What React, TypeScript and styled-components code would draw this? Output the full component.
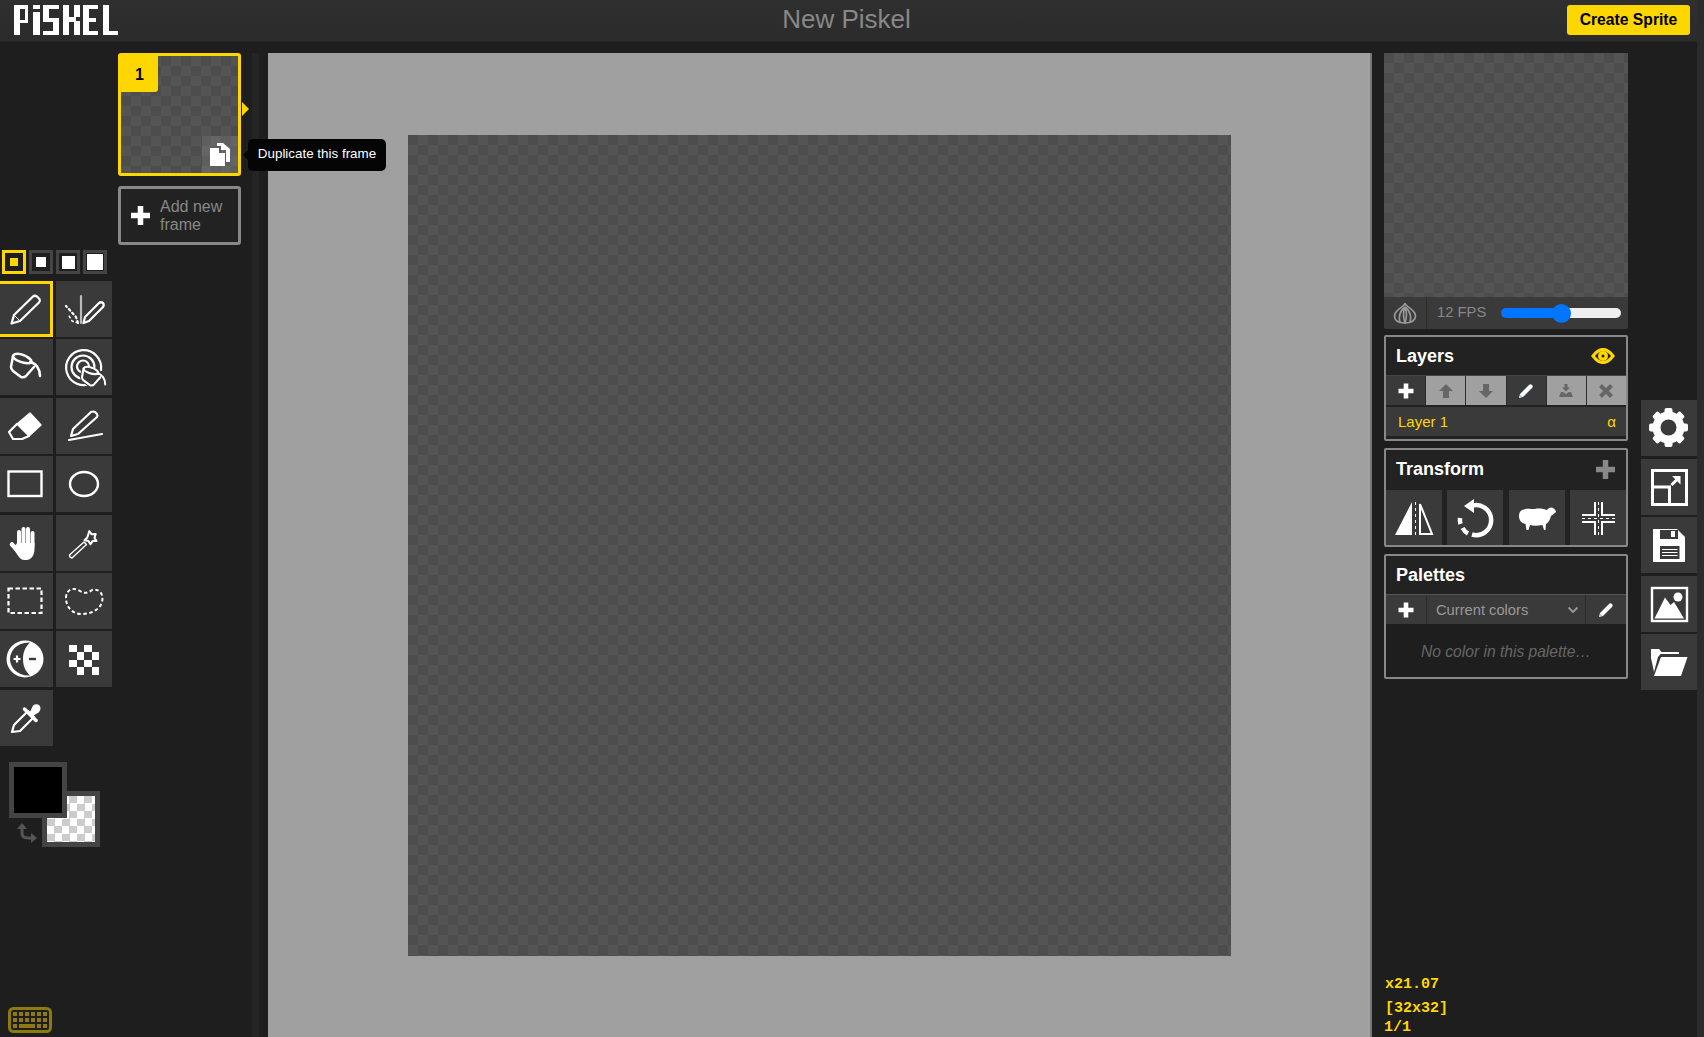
import React from "react";
import styled, { createGlobalStyle } from "styled-components";

const YELLOW = "#ffd700";

const GlobalStyle = createGlobalStyle`
  html, body {
    margin: 0;
    height: 100%;
    overflow: hidden;
    background: #1e1e1e;
    font-family: "Liberation Sans", Arial, sans-serif;
  }
  * { box-sizing: border-box; }
`;

const Page = styled.div`
  display: flex;
  width: 1704px;
  height: 1037px;
  overflow: hidden;
`;
const PageBar = styled.div`
  width: 7px;
  background: #2b2b2b;
`;
const Main = styled.div`
  display: flex;
  flex-direction: column;
  width: 1697px;
`;
const Header = styled.header`
  position: relative;
  display: flex;
  align-items: center;
  justify-content: space-between;
  height: 42px;
  padding: 0 7px 2px 14px;
  background: linear-gradient(#2f2f2f, #2b2b2b);
  border-bottom: 1px solid #252525;
`;
const Title = styled.div`
  position: absolute;
  left: 0;
  right: 0;
  text-align: center;
  font-size: 26px;
  color: #888;
  padding-right: 4px;
`;
const CreateButton = styled.button`
  position: relative;
  width: 123px;
  height: 30px;
  border: 0;
  border-radius: 3px;
  background: ${YELLOW};
  color: #000;
  font: bold 15.7px "Liberation Sans", Arial, sans-serif;
  padding: 0;
`;
const Body = styled.div`
  display: flex;
  flex: 1;
  min-height: 0;
`;

/* left tools */
const ToolsColumn = styled.div`
  width: 112px;
  padding-top: 208px;
  display: flex;
  flex-direction: column;
  position: relative;
`;
const PenSizes = styled.div`
  display: flex;
  gap: 3px;
  padding-left: 2px;
  height: 31px;
`;
const PenSize = styled.div<{ $active?: boolean }>`
  width: 24px;
  height: 24px;
  display: flex;
  align-items: center;
  justify-content: center;
  border: 3px solid ${(p) => (p.$active ? YELLOW : "#444")};
`;
const PenDot = styled.div<{ $size: number; $active?: boolean }>`
  width: ${(p) => p.$size}px;
  height: ${(p) => p.$size}px;
  background: ${(p) => (p.$active ? YELLOW : "#fff")};
`;
const ToolGrid = styled.div`
  display: grid;
  grid-template-columns: 56px 56px;
  grid-auto-rows: 56px;
  column-gap: 3px;
  row-gap: 2.4px;
  margin-left: -3px;
`;
const Tool = styled.div<{ $selected?: boolean }>`
  position: relative;
  width: 56px;
  height: 56px;
  background: #3a3a3a;
  ${(p) => (p.$selected ? `box-shadow: inset 0 0 0 3px ${YELLOW};` : "")}
  svg { display: block; }
`;
const Colors = styled.div`
  position: relative;
  height: 86px;
  margin: 16px 0 0 9px;
`;
const ColorSwatch = styled.div`
  position: absolute;
  left: 0;
  top: 0;
  width: 58px;
  height: 56px;
  border: 5px solid #444;
  background: #000;
  z-index: 1;
`;
const SecondarySwatch = styled.div`
  position: absolute;
  left: 33px;
  top: 29px;
  width: 58px;
  height: 56px;
  border: 5px solid #444;
  background: repeating-conic-gradient(#ccc 0 25%, #fff 0 50%) 0 0 / 15px 15px;
`;
const SwapIcon = styled.svg`
  position: absolute;
  left: 7px;
  top: 60px;
`;
const KeyboardIcon = styled.svg`
  position: absolute;
  left: 8px;
  bottom: 4px;
`;

/* frames */
const FramesColumn = styled.div`
  width: 123px;
  margin-left: 6px;
  padding-top: 11px;
  display: flex;
  flex-direction: column;
  gap: 10px;
`;
const checker = `repeating-conic-gradient(#545454 0 25%, #4d4d4d 0 50%) 0 0 / 20px 20px`;
const Thumb = styled.div`
  position: relative;
  width: 123px;
  height: 123px;
  border: 3px solid ${YELLOW};
  border-radius: 3px;
  background: ${checker};
`;
const FrameIndex = styled.div`
  position: absolute;
  left: 0;
  top: 0;
  width: 37px;
  height: 36px;
  background: ${YELLOW};
  border-bottom-right-radius: 3px;
  font-weight: bold;
  font-size: 16px;
  line-height: 37px;
  text-align: center;
`;
const DuplicateButton = styled.div`
  position: absolute;
  right: 0;
  bottom: 0;
  width: 36px;
  height: 37px;
  background: rgba(255, 255, 255, 0.1);
  display: flex;
  align-items: center;
  justify-content: center;
`;
const ThumbArrow = styled.div`
  position: absolute;
  left: 121px;
  top: 46px;
  border-left: 7px solid ${YELLOW};
  border-top: 7px solid transparent;
  border-bottom: 7px solid transparent;
`;
const Tooltip = styled.div`
  position: absolute;
  left: 127px;
  top: 83px;
  width: 138px;
  height: 32px;
  border-radius: 5px;
  background: #050505;
  color: #fff;
  font-size: 13.4px;
  line-height: 29px;
  text-align: center;
  white-space: nowrap;
  z-index: 5;
  &::before {
    content: "";
    position: absolute;
    left: -5px;
    top: 11px;
    border-right: 5px solid #050505;
    border-top: 5px solid transparent;
    border-bottom: 5px solid transparent;
  }
`;
const AddFrame = styled.div`
  display: flex;
  align-items: center;
  gap: 10px;
  width: 123px;
  height: 59px;
  padding-left: 10px;
  border: 3px solid #888;
  border-radius: 3px;
  background: #222;
  color: #888;
  font-size: 16px;
  line-height: 18px;
`;
const FramesBar = styled.div`
  width: 7px;
  margin: 11px 0 0 11px;
  background: #252525;
`;

/* canvas */
const Stage = styled.main`
  width: 1104px;
  margin: 11px 0 0 9px;
  background: #a0a0a0;
  border-right: 2px solid #777;
  display: flex;
  align-items: center;
  justify-content: center;
`;
const Canvas = styled.div`
  width: 823px;
  height: 821px;
  margin: 1px 0 0 1px;
  background: ${checker};
`;

/* right column */
const RightColumn = styled.div`
  position: relative;
  width: 244px;
  margin-left: 12px;
  padding-top: 11px;
  display: flex;
  flex-direction: column;
`;
const Preview = styled.div`
  width: 244px;
  height: 244px;
  background: ${checker};
`;
const FpsBar = styled.div`
  display: flex;
  align-items: center;
  height: 32px;
  padding-bottom: 2px;
  background: #3a3a3a;
  border-radius: 0 0 2px 2px;
  color: #888;
  font-size: 14.8px;
`;
const OnionCell = styled.div`
  width: 43px;
  height: 32px;
  margin-bottom: -2px;
  display: flex;
  align-items: center;
  justify-content: center;
  border-right: 1px solid #2c2c2c;
`;
const FpsLabel = styled.span`
  margin-left: 10px;
  width: 64px;
`;
const FpsSlider = styled.input`
  appearance: none;
  width: 120px;
  height: 19px;
  margin: 2px 0 0;
  background: transparent;
  &::-webkit-slider-runnable-track {
    height: 10px;
    border-radius: 5px;
    background: linear-gradient(90deg, #0075ff 50%, #efefef 50%);
  }
  &::-webkit-slider-thumb {
    appearance: none;
    width: 19px;
    height: 19px;
    margin-top: -4.5px;
    border-radius: 50%;
    background: #0075ff;
  }
`;
const Panel = styled.section<{ $top: number }>`
  margin-top: ${(p) => p.$top}px;
  border: 2px solid #888;
  border-radius: 2px;
  background: #222;
`;
const PanelHead = styled.div<{ $height: number; $lift?: number }>`
  display: flex;
  align-items: center;
  justify-content: space-between;
  height: ${(p) => p.$height}px;
  padding: 0 11px ${(p) => p.$lift ?? 0}px 10px;
  color: #fff;
  font-weight: bold;
  font-size: 18px;
`;
const ButtonRow = styled.div`
  display: flex;
  gap: 1px;
  height: 30px;
  border-top: 1px solid #444;
  background: #2c2c2c;
`;
const RowButton = styled.div<{ $disabled?: boolean }>`
  flex: 1;
  display: flex;
  align-items: center;
  justify-content: center;
  background: ${(p) => (p.$disabled ? "#a0a0a0" : "#3a3a3a")};
`;
const LayerRow = styled.div`
  display: flex;
  justify-content: space-between;
  align-items: center;
  height: 29px;
  margin: 2px 0 3px;
  padding: 0 10px 0 12px;
  background: #3a3a3a;
  color: ${YELLOW};
  font-size: 15px;
`;
const TransformRow = styled.div`
  display: grid;
  grid-template-columns: repeat(4, 56px);
  justify-content: space-between;
  height: 55px;
`;
const TransformTool = styled.div`
  height: 55px;
  background: #3a3a3a;
`;
const PaletteRow = styled.div`
  display: flex;
  height: 30px;
  border-top: 1px solid #555;
  background: #2c2c2c;
  gap: 1px;
`;
const PaletteEnd = styled.div`
  width: 40px;
  display: flex;
  align-items: center;
  justify-content: center;
  background: #3a3a3a;
`;
const PaletteSelect = styled.div`
  flex: 1;
  display: flex;
  align-items: center;
  justify-content: space-between;
  padding: 0 6px 0 9px;
  background: #3a3a3a;
  color: #999;
  font-size: 14.7px;
`;
const PaletteEmpty = styled.div`
  height: 53px;
  background: #1e1e1e;
  color: #666;
  font-style: italic;
  font-size: 15.6px;
  line-height: 56px;
  text-align: center;
`;
const Stats = styled.div`
  margin-top: auto;
  height: 65px;
  color: ${YELLOW};
  font: bold 15px "Liberation Mono", "Courier New", monospace;
  display: flex;
  flex-direction: column;
  padding-left: 1px;
`;
const StatLine = styled.div<{ $height: number }>`
  height: ${(p) => p.$height}px;
  line-height: ${(p) => p.$height}px;
  margin-left: ${(p) => (p.$height === 18 ? -1 : 0)}px;
`;
const SideColumn = styled.nav`
  width: 56px;
  margin-left: 13px;
  padding-top: 358px;
  display: flex;
  flex-direction: column;
  gap: 2.5px;
`;

/* icons */
const Ico = styled.svg`
  display: block;
  flex: none;
`;
const line = { fill: "none", stroke: "#fff", strokeWidth: 2.2, strokeLinejoin: "round", strokeLinecap: "round" } as const;

const Logo = () => (
  <Ico width="104" height="30" viewBox="0 0 104 30" fill="#fff" shapeRendering="crispEdges" role="img" aria-label="Piskel">
    <rect x="0" y="0" width="6" height="30" /><rect x="6" y="0" width="8" height="4" /><rect x="11" y="0" width="3" height="18" /><rect x="6" y="15" width="8" height="3" />
    <rect x="19" y="0" width="7" height="4" /><rect x="19" y="7" width="7" height="23" />
    <rect x="29" y="0" width="16" height="4" /><rect x="29" y="0" width="6" height="17" /><rect x="29" y="13" width="16" height="4" /><rect x="39" y="13" width="6" height="17" /><rect x="29" y="26" width="16" height="4" />
    <rect x="49" y="0" width="6" height="30" /><rect x="55" y="12" width="7" height="5" /><rect x="60" y="0" width="6" height="12" /><rect x="60" y="16" width="6" height="14" />
    <rect x="69" y="0" width="6" height="30" /><rect x="75" y="0" width="9" height="4" /><rect x="75" y="13" width="7" height="4" /><rect x="75" y="26" width="9" height="4" />
    <rect x="89" y="0" width="6" height="30" /><rect x="95" y="26" width="9" height="4" />
  </Ico>
);

const PENCIL = "M14.5 42.5 L17 34 L36 15.5 Q38 14 40 15.5 L42.5 18 Q43.5 20 42 21.5 L23 40 Z";
const BUCKET_TOP = "M16 17 C18 13 28 15 33 20 C35 22 35 24 33 24 C27 25 16 21 16 17Z";
const BUCKET_BODY = "M16 17 L14 28 C14 30 15 31 16 32 L24 38 Q27 39 29 37 L37 28";
const BUCKET_DRIP = "M33 23 C39 24 43 30 43 37";

const ToolSvg = ({ children }: { children: React.ReactNode }) => (
  <svg width="56" height="56" viewBox="0 0 56 56">{children}</svg>
);

const PenIcon = () => (
  <ToolSvg><path d={PENCIL} {...line} /><path d="M17 34 L23 40" {...line} strokeWidth={1} /></ToolSvg>
);
const SymmetryIcon = () => (
  <ToolSvg>
    <path d="M25 15 V42" {...line} stroke="#bbb" />
    <path d="M27.5 42 L29 36 L43 22 Q45 20.500 47 22 Q48.500 24 47 26 L33 40 Z" {...line} />
    <path d="M22 42 L20 36 L10 25" {...line} strokeDasharray="2 3" />
    <path d="M22 42 L16 40 L12 33" {...line} strokeDasharray="2 3" strokeWidth={1.500} />
  </ToolSvg>
);
const BucketIcon = () => (
  <ToolSvg>
    <path d={BUCKET_TOP} {...line} strokeWidth={2.500} />
    <path d={BUCKET_BODY} {...line} strokeWidth={2.500} />
    <path d={BUCKET_DRIP} {...line} strokeWidth={2.500} />
  </ToolSvg>
);
const SameColorIcon = () => (
  <ToolSvg>
    <path d="M36 44 A17.500 17.500 0 1 1 45 31" {...line} />
    <path d="M27 39.500 A11.500 11.500 0 1 1 38.500 28" {...line} />
    <path d="M27 33.500 A6 6 0 1 1 33 27" {...line} />
    <g transform="translate(14.800 15.800) scale(.8)">
      <path d={BUCKET_BODY + " Z"} fill="#3a3a3a" stroke="#3a3a3a" strokeWidth={5} />
      <path d={BUCKET_TOP} {...line} fill="#3a3a3a" strokeWidth={2.600} />
      <path d={BUCKET_BODY} {...line} strokeWidth={2.600} />
      <path d={BUCKET_DRIP} {...line} strokeWidth={2.600} />
    </g>
  </ToolSvg>
);
const EraserIcon = () => (
  <ToolSvg>
    <path d="M33 15 L44 27 L32 38 L20 26 Z" fill="#fff" stroke="#fff" strokeLinejoin="round" strokeWidth={1.500} />
    <path d="M20 26 L12 34 L16 41 L25 41 L32 38" {...line} />
  </ToolSvg>
);
const StrokeIcon = () => (
  <ToolSvg>
    <path d="M15 38 L17 31 L35 14 Q37 13 39 14 L41 16 Q42 18 41 19 L22 36 Z" {...line} />
    <path d="M13 42 L46 36" {...line} />
  </ToolSvg>
);
const RectIcon = () => (
  <ToolSvg><rect x="11.500" y="15.500" width="33" height="24.500" fill="none" stroke="#fff" strokeWidth={2.400} /></ToolSvg>
);
const EllipseIcon = () => (
  <ToolSvg><ellipse cx="28" cy="28" rx="14" ry="12" {...line} strokeWidth={2.400} /></ToolSvg>
);
const HandIcon = () => (
  <ToolSvg>
    <g stroke="#fff" strokeWidth={4} strokeLinecap="round" fill="none">
      <path d="M22 17 V30" /><path d="M26.500 14 V30" /><path d="M31 14 V30" /><path d="M35.500 18 V31" />
      <path d="M15 29.500 L21 36" strokeWidth={4.600} />
    </g>
    <path d="M20 28 H37.500 V34 C37.500 41 33.500 45 29.500 45 H27.500 C24.500 45 22.500 43 20.500 40 L16.500 34 Z" fill="#fff" />
  </ToolSvg>
);
const WandIcon = () => (
  <ToolSvg>
    <path d="M14 42 L13.500 40 L28 27 L30.500 29.500 L16 43 Z" {...line} strokeWidth={1.400} />
    <g transform="translate(6.900 4.500) scale(.8)">
      <path d="M33 14.500 L36 18.500 L41 18 L39.500 23 L42 27 L37 27 L34.500 31 L32 27 L27 26 L30.500 22.500 Z" {...line} strokeWidth={2.500} />
    </g>
  </ToolSvg>
);
const RectSelectIcon = () => (
  <ToolSvg><rect x="11.500" y="15.500" width="33" height="24.500" fill="none" stroke="#fff" strokeWidth={2.200} strokeDasharray="4.500 2.500" /></ToolSvg>
);
const LassoIcon = () => (
  <ToolSvg>
    <path d="M10 25 C10 16 18 14 24 18 C28 21 32 20 36 17 C43 15 48 21 46 29 C44 37 34 41 26 41 C16 41 10 34 10 25Z" fill="none" stroke="#fff" strokeWidth={2} strokeDasharray="3.500 2.500" />
  </ToolSvg>
);
const LightenIcon = () => (
  <ToolSvg>
    <circle cx="28" cy="28" r="18.500" fill="#fff" />
    <path d="M33 11.500 C20 11 13 20 13 28 C13 36 20 45 33 44.500 C28 40 26 34 26 28 C26 22 28 16 33 11.500Z" fill="#3a3a3a" />
    <path d="M20 24.500 V31.500 M16.500 28 H23.500" stroke="#fff" strokeWidth={2.200} />
    <path d="M32 28 H39" stroke="#3a3a3a" strokeWidth={2.400} />
  </ToolSvg>
);
const DitherIcon = () => (
  <ToolSvg>
    <g fill="#fff" shapeRendering="crispEdges">
      {[0, 1, 2, 3].flatMap((r) => [0, 1].map((c) => (
        <rect key={`${r}-${c}`} x={13 + (c * 2 + (r % 2)) * 7.5} y={13.5 + r * 7.5} width="7.500" height="7.500" />
      )))}
    </g>
  </ToolSvg>
);
const DropperIcon = () => (
  <ToolSvg>
    <path d="M15 42 L17 35 L31 21 L37 27 L23 41 Z" {...line} />
    <path d="M27.500 19 L39 30.500" stroke="#fff" strokeWidth={3.500} strokeLinecap="round" />
    <path d="M33 22 L36 15.500 Q39.500 13 42.500 15.500 Q45 19 41.500 22.500 L36 26 Z" fill="#fff" />
  </ToolSvg>
);

const SideIcons = {
  gear: (
    <ToolSvg>
      <circle cx="27.500" cy="27.500" r="12" fill="none" stroke="#fff" strokeWidth={8} />
      {[0, 45, 90, 135, 180, 225, 270, 315].map((a) => (
        <rect key={a} x="23.500" y="8" width="8" height="8" rx="2" fill="#fff" transform={`rotate(${a} 27.500 27.500)`} />
      ))}
    </ToolSvg>
  ),
  resize: (
    <ToolSvg>
      <rect x="11.500" y="11.500" width="34" height="34" fill="none" stroke="#fff" strokeWidth={3} />
      <path d="M11 28 H28.500 V46" fill="none" stroke="#fff" strokeWidth={3} />
      <path d="M30.500 26 L36 20.500" stroke="#fff" strokeWidth={3} />
      <path d="M31 17 H39.500 V25.500 Z" fill="#fff" />
    </ToolSvg>
  ),
  save: (
    <ToolSvg>
      <path d="M12 12 H36 L44 20 V45 H12 Z" fill="#fff" />
      <path d="M19 13 H37 V22 H19 Z" fill="#3a3a3a" />
      <rect x="30" y="14" width="4" height="6" fill="#fff" />
      <rect x="19" y="29" width="19.500" height="13" fill="#3a3a3a" />
      <path d="M21 32.500 H36.500 M21 35.500 H36.500 M21 38.500 H36.500" stroke="#fff" />
    </ToolSvg>
  ),
  image: (
    <ToolSvg>
      <rect x="11" y="12" width="35" height="33" fill="none" stroke="#fff" strokeWidth={2.400} />
      <path d="M13.500 42.500 L24 21.500 L29.500 29 L33 26 L43 42.500 Z" fill="#fff" />
      <circle cx="37" cy="21" r="4.500" fill="#fff" />
    </ToolSvg>
  ),
  folder: (
    <ToolSvg>
      <path d="M10 15 H18 L20.500 18 H38 V20 H19.500 L17 23 L13 38 L10 24 Z" fill="#fff" />
      <path d="M20 23 H46.500 L40 42 H13 Z" fill="#fff" strokeLinejoin="round" />
    </ToolSvg>
  ),
};

const SmallPlus = () => (
  <Ico width="18" height="18" viewBox="0 0 18 18"><path d="M9 1.500 V16.500 M1.500 9 H16.500" stroke="#fff" strokeWidth={4.600} /></Ico>
);
const LargePlus = ({ color }: { color: string }) => (
  <Ico width="19" height="19" viewBox="0 0 19 19"><path d="M9.500 0 V19 M0 9.500 H19" stroke={color} strokeWidth={5.500} /></Ico>
);
const SmallPencil = () => (
  <Ico width="16" height="16" viewBox="0 0 16 16">
    <path d="M1 15 L2 11 L11 2 Q12.500 .500 14 2 Q15.500 3.500 14 5 L5 14 Z" fill="#fff" />
    <path d="M1.500 14.500 L2.200 11.500 L4.500 13.800 Z" fill="#9cf" />
  </Ico>
);
const ArrowUp = () => (
  <Ico width="16" height="16" viewBox="0 0 16 16"><path d="M8 1 L15 8 H11 V15 H5 V8 H1 Z" fill="#666" /></Ico>
);
const ArrowDown = () => (
  <Ico width="16" height="16" viewBox="0 0 16 16"><path d="M8 15 L15 8 H11 V1 H5 V8 H1 Z" fill="#666" /></Ico>
);
const MergeIcon = () => (
  <Ico width="16" height="16" viewBox="0 0 16 16">
    <path d="M6.500 1 H9.500 V4.500 H12 L8 8.500 L4 4.500 H6.500 Z" fill="#666" />
    <path d="M3 9 H5 L8 11 L11 9 H13 L15 14 H1 Z" fill="#666" />
  </Ico>
);
const CrossIcon = () => (
  <Ico width="16" height="16" viewBox="0 0 16 16"><path d="M2.500 2.500 L13.500 13.500 M13.500 2.500 L2.500 13.500" stroke="#666" strokeWidth={4} /></Ico>
);

export default function App() {
  return (
    <Page>
      <GlobalStyle />
      <Main>
        <Header>
          <Logo />
          <Title>New Piskel</Title>
          <CreateButton>Create Sprite</CreateButton>
        </Header>
        <Body>
          <ToolsColumn>
            <PenSizes>
              <PenSize $active><PenDot $size={8} $active /></PenSize>
              <PenSize><PenDot $size={10} /></PenSize>
              <PenSize><PenDot $size={13} /></PenSize>
              <PenSize><PenDot $size={16} /></PenSize>
            </PenSizes>
            <ToolGrid>
              <Tool $selected><PenIcon /></Tool>
              <Tool><SymmetryIcon /></Tool>
              <Tool><BucketIcon /></Tool>
              <Tool><SameColorIcon /></Tool>
              <Tool><EraserIcon /></Tool>
              <Tool><StrokeIcon /></Tool>
              <Tool><RectIcon /></Tool>
              <Tool><EllipseIcon /></Tool>
              <Tool><HandIcon /></Tool>
              <Tool><WandIcon /></Tool>
              <Tool><RectSelectIcon /></Tool>
              <Tool><LassoIcon /></Tool>
              <Tool><LightenIcon /></Tool>
              <Tool><DitherIcon /></Tool>
              <Tool><DropperIcon /></Tool>
            </ToolGrid>
            <Colors>
              <ColorSwatch />
              <SecondarySwatch />
              <SwapIcon width="22" height="22" viewBox="0 0 22 22">
                <path d="M6 6 V11 Q6 16 12 16 H16" fill="none" stroke="#555" strokeWidth={3} />
                <path d="M6 1 L11 7 H1 Z" fill="#555" />
                <path d="M21 16 L15 11 V21 Z" fill="#555" />
              </SwapIcon>
            </Colors>
            <KeyboardIcon width="44" height="26" viewBox="0 0 44 26">
              <rect x="1.500" y="1.500" width="41" height="23" rx="4" fill="none" stroke="#8f7a10" strokeWidth={3} />
              <g fill="#8f7a10" shapeRendering="crispEdges">
                {[0, 1, 2, 3, 4, 5].map((c) => <rect key={`a${c}`} x={5 + c * 6} y={5} width="4" height="4" />)}
                {[0, 1, 2, 3, 4, 5].map((c) => <rect key={`b${c}`} x={5 + c * 6} y={11} width="4" height="4" />)}
                <rect x="5" y="17" width="4" height="4" />
                <rect x="11" y="17" width="16" height="4" />
                <rect x="29" y="17" width="4" height="4" />
                <rect x="35" y="17" width="4" height="4" />
              </g>
            </KeyboardIcon>
          </ToolsColumn>

          <FramesColumn>
            <Thumb>
              <FrameIndex>1</FrameIndex>
              <DuplicateButton>
                <Ico width="20" height="23" viewBox="0 0 20 23">
                  <path d="M7 0 H13 L20 6 V19 H16 V7 H11 V3 H7 Z" fill="#fff" />
                  <path d="M0 5 H9 V10 H15 V23 H0 Z" fill="#fff" />
                </Ico>
              </DuplicateButton>
              <ThumbArrow />
              <Tooltip>Duplicate this frame</Tooltip>
            </Thumb>
            <AddFrame>
              <LargePlus color="#fff" />
              <span>Add new<br />frame</span>
            </AddFrame>
          </FramesColumn>
          <FramesBar />

          <Stage>
            <Canvas />
          </Stage>

          <RightColumn>
            <Preview />
            <FpsBar>
              <OnionCell>
                <Ico width="24" height="22" viewBox="0 0 24 22" fill="none" stroke="#999" strokeWidth={1.700}>
                  <path d="M12 1 C12 5 1.500 7 1.500 14 C1.500 18 5 21 12 21 C19 21 22.500 18 22.500 14 C22.500 7 12 5 12 1Z" />
                  <path d="M12 5 C7 9 5 13 7 20 M12 5 C17 9 19 13 17 20 M12 5 C10 10 10 15 12 21 C14 15 14 10 12 5" />
                </Ico>
              </OnionCell>
              <FpsLabel>12 FPS</FpsLabel>
              <FpsSlider type="range" min={0} max={24} value={12} readOnly />
            </FpsBar>

            <Panel $top={6}>
              <PanelHead $height={38}>
                <span>Layers</span>
                <Ico width="24" height="16" viewBox="0 0 24 16">
                  <path d="M0 8 C5 1 9 0 12 0 C15 0 19 1 24 8 C19 15 15 16 12 16 C9 16 5 15 0 8Z" fill={YELLOW} />
                  <path d="M4 8 C7 4.500 9 3.500 12 3 C15 3.500 17 4.500 20 8 C17 11.500 15 12.500 12 13 C9 12.500 7 11.500 4 8Z" fill="#222" />
                  <circle cx="12" cy="8" r="5" fill={YELLOW} />
                  <circle cx="12" cy="8" r="1.500" fill="#222" />
                </Ico>
              </PanelHead>
              <ButtonRow>
                <RowButton><SmallPlus /></RowButton>
                <RowButton $disabled><ArrowUp /></RowButton>
                <RowButton $disabled><ArrowDown /></RowButton>
                <RowButton><SmallPencil /></RowButton>
                <RowButton $disabled><MergeIcon /></RowButton>
                <RowButton $disabled><CrossIcon /></RowButton>
              </ButtonRow>
              <LayerRow><span>Layer 1</span><span>α</span></LayerRow>
            </Panel>

            <Panel $top={7}>
              <PanelHead $height={40} $lift={2}>
                <span>Transform</span>
                <LargePlus color="#888" />
              </PanelHead>
              <TransformRow>
                <TransformTool>
                  <ToolSvg>
                    <path d="M26 12 V45 H9 Z" fill="#fff" />
                    <path d="M34 14 V44 H46 Z" fill="none" stroke="#fff" strokeWidth={2} />
                    <path d="M29.500 12 V46" stroke="#fff" strokeDasharray="3 3" />
                  </ToolSvg>
                </TransformTool>
                <TransformTool>
                  <ToolSvg>
                    <path d="M24 16 A15 15 0 1 1 25 44.500" fill="none" stroke="#fff" strokeWidth={4.500} />
                    <path d="M13.500 34 A15 15 0 0 1 13 28" fill="none" stroke="#fff" strokeWidth={4.500} />
                    <path d="M21 43.500 A15 15 0 0 1 15.500 38" fill="none" stroke="#fff" strokeWidth={4.500} />
                    <path d="M17 16 L27 9 V23 Z" fill="#fff" />
                  </ToolSvg>
                </TransformTool>
                <TransformTool>
                  <ToolSvg>
                    <path d="M13 20 C18 18 22 19 26 19 C30 18 35 19 38 20 C40 17 43 17 44 18 C46 19 47 21 47 22 C45 24 43 25 42 26 C41 30 39 33 37 34 L36.500 40 H35 L33.500 35 C28 36 24 36 21 35 L19.500 40 H17.500 L16.500 34 C12 33 10 30 10 26 C10 23 11 21 13 20Z" fill="#fff" />
                  </ToolSvg>
                </TransformTool>
                <TransformTool>
                  <ToolSvg>
                    <path d="M25 12 V25 H12 M32 12 V25 H45 M25 45 V32 H12 M32 45 V32 H45" fill="none" stroke="#fff" strokeWidth={2} />
                    <path d="M12 28.500 H45 M28.500 12 V45" stroke="#fff" strokeDasharray="3 3" />
                  </ToolSvg>
                </TransformTool>
              </TransformRow>
            </Panel>

            <Panel $top={7}>
              <PanelHead $height={38}><span>Palettes</span></PanelHead>
              <PaletteRow>
                <PaletteEnd><SmallPlus /></PaletteEnd>
                <PaletteSelect>
                  <span>Current colors</span>
                  <Ico width="12" height="8" viewBox="0 0 12 8"><path d="M1.500 1.500 L6 6 L10.500 1.500" fill="none" stroke="#999" strokeWidth={1.800} /></Ico>
                </PaletteSelect>
                <PaletteEnd><SmallPencil /></PaletteEnd>
              </PaletteRow>
              <PaletteEmpty>No color in this palette…</PaletteEmpty>
            </Panel>

            <Stats>
              <StatLine $height={26}>x21.07</StatLine>
              <StatLine $height={21}>[32x32]</StatLine>
              <StatLine $height={18}>1/1</StatLine>
            </Stats>
          </RightColumn>

          <SideColumn>
            <Tool>{SideIcons.gear}</Tool>
            <Tool>{SideIcons.resize}</Tool>
            <Tool>{SideIcons.save}</Tool>
            <Tool>{SideIcons.image}</Tool>
            <Tool>{SideIcons.folder}</Tool>
          </SideColumn>
        </Body>
      </Main>
      <PageBar />
    </Page>
  );
}
